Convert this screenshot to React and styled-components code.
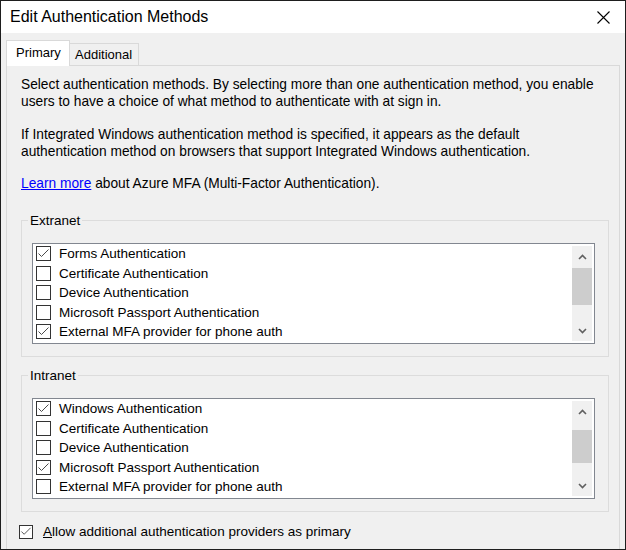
import React from 'react'
import styled, { createGlobalStyle } from 'styled-components'

const Global = createGlobalStyle`
  html, body {
    margin: 0;
    padding: 0;
    background: #fff;
  }
  * {
    box-sizing: border-box;
  }
`

const Window = styled.div`
  width: 626px;
  height: 550px;
  border: 1px solid #1e1e1e;
  background: #f0f0f0;
  overflow: hidden;
  display: flex;
  flex-direction: column;
  font-family: 'Liberation Sans', Arial, sans-serif;
  font-size: 13.5px;
  color: #000;
`

const TitleBar = styled.div`
  height: 32px;
  flex: none;
  background: #fff;
  display: flex;
  align-items: center;
  justify-content: space-between;
  padding: 0 15px 0 9px;
`

const Title = styled.div`
  font-size: 16px;
`

const Body = styled.div`
  flex: 1;
  min-height: 0;
  padding: 7px 5px 0 5px;
  display: flex;
  flex-direction: column;
`

const Tabs = styled.div`
  display: flex;
  align-items: flex-end;
  height: 25px;
  flex: none;
  font-size: 13px;
`

const Tab = styled.div`
  width: ${p => p.$w}px;
  height: ${p => (p.$active ? 26 : 22)}px;
  margin-bottom: ${p => (p.$active ? -1 : 0)}px;
  border: 1px solid #d9d9d9;
  border-bottom: none;
  border-left: ${p => (p.$active ? '1px solid #d9d9d9' : 'none')};
  background: ${p => (p.$active ? '#fff' : '#f0f0f0')};
  z-index: ${p => (p.$active ? 1 : 0)};
  display: flex;
  align-items: center;
  padding-left: ${p => (p.$active ? 9 : 5)}px;
  padding-bottom: ${p => (p.$active ? 2 : 0)}px;
`

const Panel = styled.div`
  flex: none;
  height: 520px;
  border: 1px solid #d9d9d9;
  padding: 10px 10px 0 14px;
`

const Para = styled.p`
  margin: 0 0 ${p => p.$gap || 0}px;
  font-size: 13.75px;
  line-height: 17px;
  white-space: nowrap;
`

const LearnMore = styled.a`
  color: #0000ff;
  text-decoration: underline;
  cursor: pointer;
`

const Group = styled.fieldset`
  margin: ${p => p.$top}px 0 0 0;
  padding: 0;
  border: 1px solid #dcdcdc;
  min-width: 0;
`

const Legend = styled.legend`
  margin-left: 6px;
  padding: 0 2px;
  line-height: 15px;
`

const ListBox = styled.div`
  margin: 15px 13px 12px 10px;
  height: 101px;
  border: 1px solid #828790;
  background: #fff;
  display: flex;
`

const Items = styled.div`
  flex: 1;
`

const Item = styled.div`
  height: 19.5px;
  display: flex;
  align-items: center;
  padding-left: 3px;
  white-space: nowrap;
`

const Box = styled.span`
  width: ${p => p.$size || 15}px;
  height: ${p => p.$size || 15}px;
  border: 1px solid #333;
  background: #fff;
  margin-right: ${p => p.$gap || 8}px;
  flex: none;
  display: flex;
  align-items: center;
  justify-content: center;
`

const ScrollBar = styled.div`
  width: 20px;
  margin: 2px 2px 2px 0;
  background: #f0f0f0;
  display: flex;
  flex-direction: column;
`

const Arrow = styled.div`
  height: 21px;
  flex: none;
  display: flex;
  align-items: center;
  justify-content: center;
  margin-top: ${p => (p.$bottom ? 'auto' : '0')};
`

const Thumb = styled.div`
  margin-top: ${p => p.$top}px;
  height: ${p => p.$h}px;
  background: #cdcdcd;
  flex: none;
`

const FooterRow = styled.label`
  display: flex;
  align-items: center;
  margin: 12px 0 0 -2px;
  white-space: nowrap;
`

const Check = () => (
  <svg width="13" height="13" viewBox="0 0 13 13">
    <polyline points="1.5,6.5 4.5,9.5 11.5,2.5" fill="none" stroke="#4a4a4a" strokeWidth="1" />
  </svg>
)

const Chevron = ({ down }) => (
  <svg width="9" height="6" viewBox="0 0 9 6">
    <polyline
      points={down ? '1,1 4.5,4.5 8,1' : '1,5 4.5,1.5 8,5'}
      fill="none"
      stroke="#606060"
      strokeWidth="1.6"
    />
  </svg>
)

const CheckList = ({ items, thumbTop, thumbH }) => (
  <ListBox>
    <Items>
      {items.map(([label, on]) => (
        <Item key={label}>
          <Box>{on && <Check />}</Box>
          {label}
        </Item>
      ))}
    </Items>
    <ScrollBar>
      <Arrow><Chevron /></Arrow>
      <Thumb $top={thumbTop} $h={thumbH} />
      <Arrow $bottom><Chevron down /></Arrow>
    </ScrollBar>
  </ListBox>
)

const extranet = [
  ['Forms Authentication', true],
  ['Certificate Authentication', false],
  ['Device Authentication', false],
  ['Microsoft Passport Authentication', false],
  ['External MFA provider for phone auth', true],
]

const intranet = [
  ['Windows Authentication', true],
  ['Certificate Authentication', false],
  ['Device Authentication', false],
  ['Microsoft Passport Authentication', true],
  ['External MFA provider for phone auth', false],
]

export default function App() {
  return (
    <>
      <Global />
      <Window>
        <TitleBar>
          <Title>Edit Authentication Methods</Title>
          <svg width="13" height="13" viewBox="0 0 13 13">
            <path d="M0.5 0.5 L12.5 12.5 M12.5 0.5 L0.5 12.5" stroke="#000" strokeWidth="1.1" />
          </svg>
        </TitleBar>
        <Body>
          <Tabs>
            <Tab $active $w={64}>Primary</Tab>
            <Tab $w={69}>Additional</Tab>
          </Tabs>
          <Panel>
            <Para $gap={16}>
              Select authentication methods. By selecting more than one authentication method, you enable
              <br />
              users to have a choice of what method to authenticate with at sign in.
            </Para>
            <Para $gap={15}>
              If Integrated Windows authentication method is specified, it appears as the default
              <br />
              authentication method on browsers that support Integrated Windows authentication.
            </Para>
            <Para>
              <LearnMore>Learn more</LearnMore> about Azure MFA (Multi-Factor Authentication).
            </Para>

            <Group $top={21}>
              <Legend>Extranet</Legend>
              <CheckList items={extranet} thumbTop={1} thumbH={37} />
            </Group>

            <Group $top={11}>
              <Legend>Intranet</Legend>
              <CheckList items={intranet} thumbTop={8} thumbH={33} />
            </Group>

            <FooterRow>
              <Box $size={14} $gap={10}><Check /></Box>
              <span><u>A</u>llow additional authentication providers as primary</span>
            </FooterRow>
          </Panel>
        </Body>
      </Window>
    </>
  )
}
